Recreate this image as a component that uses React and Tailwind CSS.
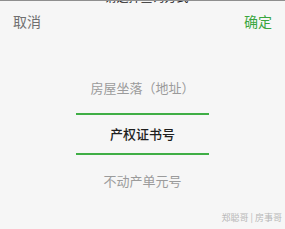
export default function App() {
  const font = { fontFamily: '"Noto Sans CJK SC", "Noto Sans", sans-serif' }
  return (
    <div className="w-[285px] h-[229px] bg-[#f6f6f6] flex flex-col overflow-hidden" style={font}>
      <div className="h-[3px] border-t border-[#8f8f8f] overflow-hidden flex justify-center">
        <span className="-mt-[11px] text-[12px] leading-[14px] text-[#222] pl-[8px]">请选择查询方式</span>
      </div>
      <div className="h-[36px] flex items-center justify-between px-[13px] text-[14px]">
        <span className="text-[#707070]">取消</span>
        <span className="text-[#3aa63f]">确定</span>
      </div>
      <div className="mt-[25px] h-[47px] flex items-center justify-center text-[13px] text-[#9b9b9b]">
        房屋坐落（地址）
      </div>
      <div className="mt-[2px] mx-auto w-[133px] h-[2px] bg-[#3fae45]" />
      <div className="h-[38px] flex items-center justify-center text-[13px] font-medium text-[#1e1e1e]">
        产权证书号
      </div>
      <div className="mx-auto w-[133px] h-[2px] bg-[#3fae45]" />
      <div className="h-[52px] flex items-center justify-center text-[13px] text-[#9b9b9b]">
        不动产单元号
      </div>
      <div className="flex-1 flex items-start justify-end pr-[3px] pt-[5px]">
        <span className="text-[9px] leading-[11px] text-[#b8b8b8]">郑聪哥 | 房事哥</span>
      </div>
    </div>
  )
}
